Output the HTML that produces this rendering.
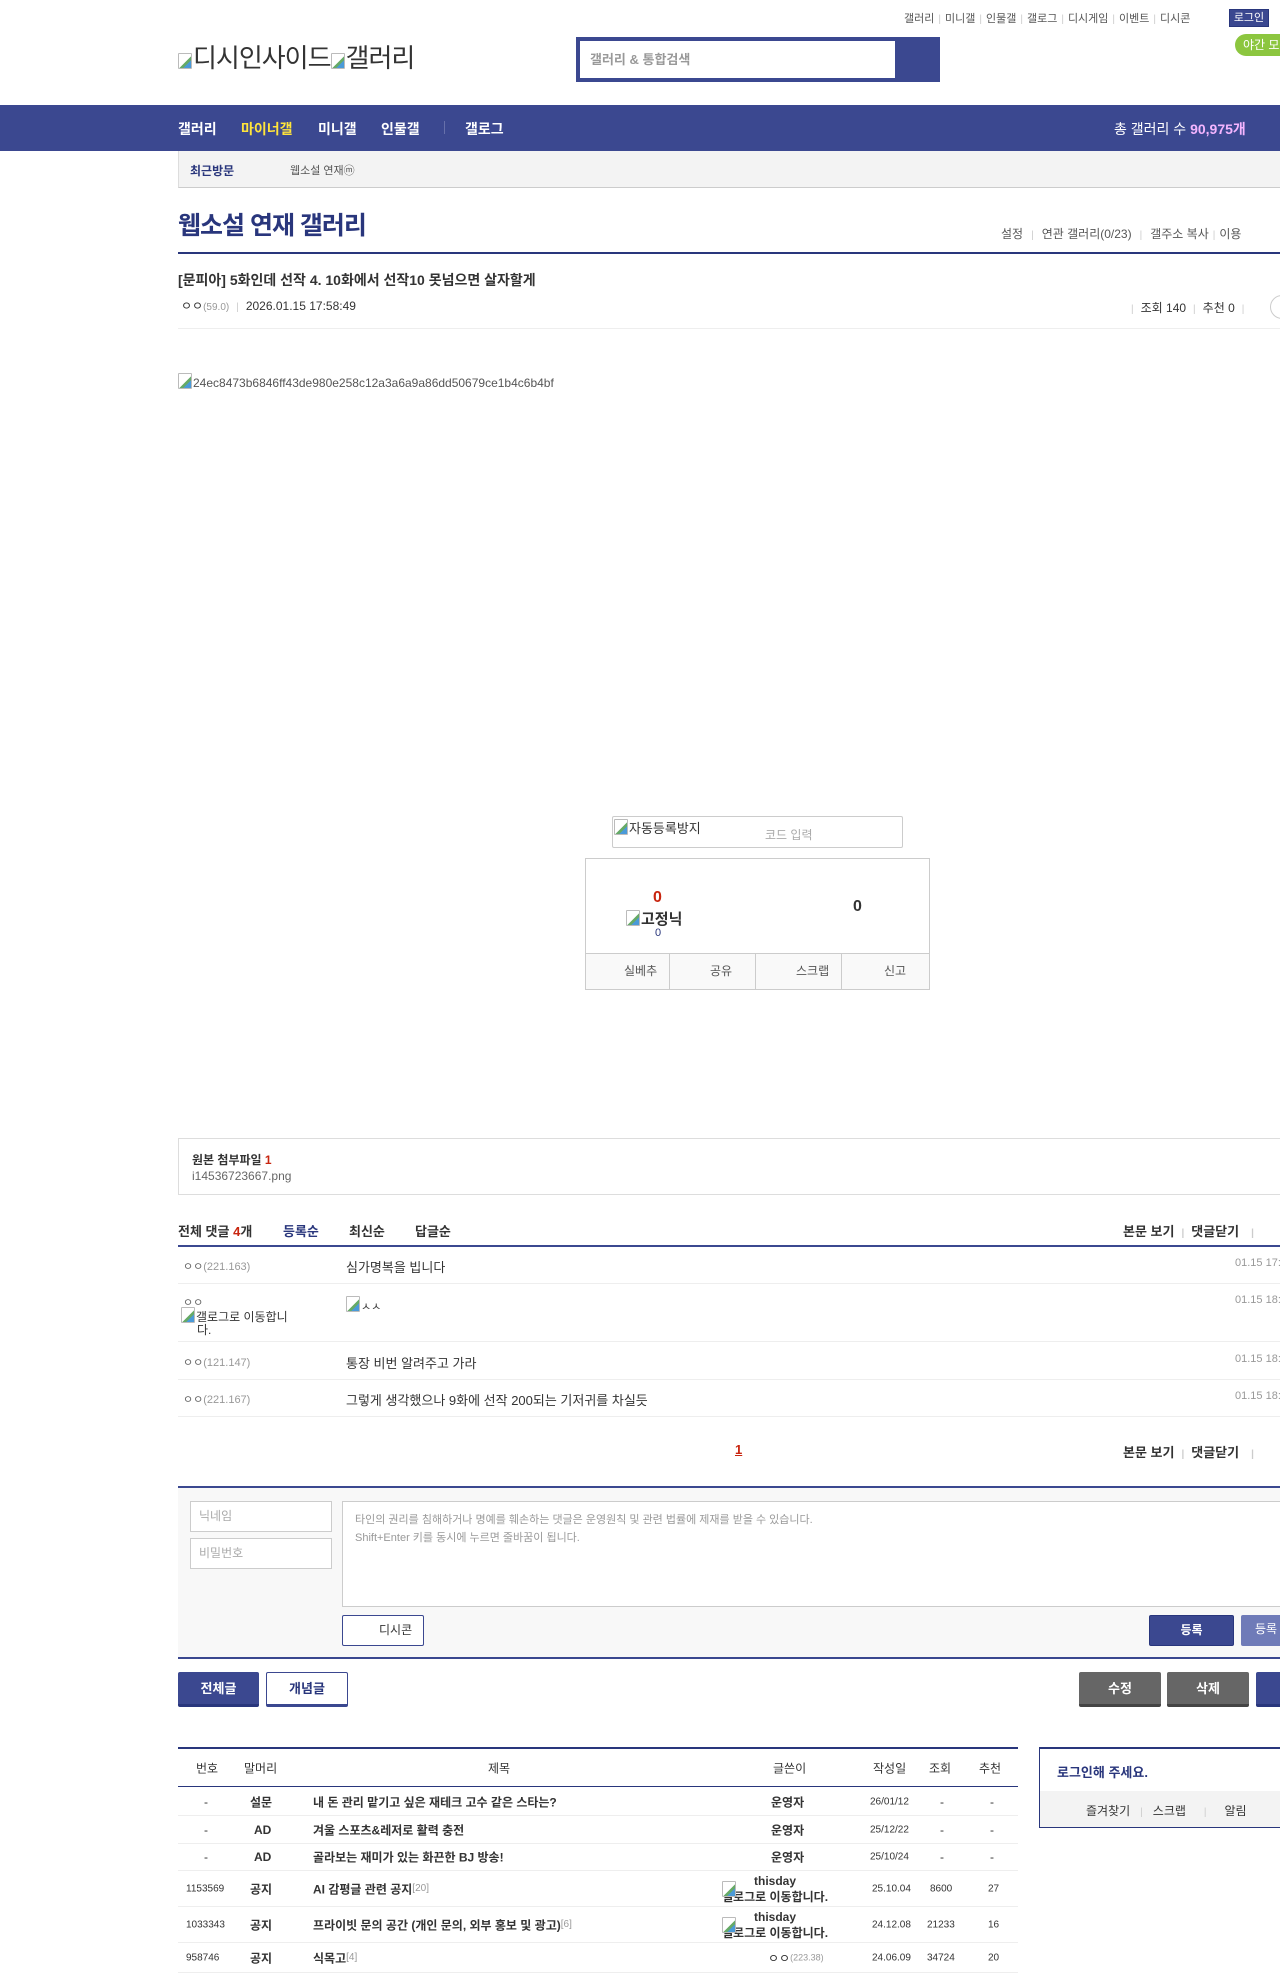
<!DOCTYPE html>
<html><head><meta charset="utf-8">
<style>
*{margin:0;padding:0;box-sizing:border-box}
body{width:1280px;height:1957px;overflow:hidden;position:relative;background:#fff;font-family:"Liberation Sans","Noto Sans CJK KR",sans-serif;color:#333;font-size:12px}
.a{position:absolute;white-space:nowrap}
.bi{display:inline-block;width:14px;height:16px;vertical-align:-2px;border:1px solid #bbb;border-radius:1px;background:linear-gradient(135deg,#fff 0,#fff 55%,#6a6 56%,#6a6 70%,#4a9ad8 71%);margin-right:1px}
.sep{color:#ccc;margin:0 4px;font-size:10px}
.navy{color:#29367c}
.gray{color:#888}
.row{position:absolute;left:178px;width:1112px;border-bottom:1px solid #eee}
.tr{position:absolute;left:178px;width:840px;border-bottom:1px solid #eee}
.tr span{position:absolute;top:50%;transform:translateY(-50%);white-space:nowrap}
.c{text-align:center}
</style></head><body>

<!-- top links -->
<div class="a" style="left:904px;top:10px;font-size:11px;color:#555">갤러리<span class="sep">|</span>미니갤<span class="sep">|</span>인물갤<span class="sep">|</span>갤로그<span class="sep">|</span>디시게임<span class="sep">|</span>이벤트<span class="sep">|</span>디시콘</div>
<div class="a" style="left:1229px;top:9px;width:40px;height:18px;background:#3b4890;border:1px solid #29367c;color:#fff;font-size:11px;text-align:center;line-height:16px">로그인</div>
<div class="a" style="left:1235px;top:34px;width:70px;height:22px;background:#8cc63f;border-radius:11px;color:#fff;font-size:12px;line-height:22px;padding-left:8px">야간 모드</div>

<!-- logo -->
<div class="a" style="left:178px;top:38px;font-size:26px;color:#333;letter-spacing:-1px"><span class="bi"></span>디시인사이드<span class="bi"></span>갤러리</div>

<!-- search -->
<div class="a" style="left:576px;top:37px;width:364px;height:45px;background:#3b4890"></div>
<div class="a" style="left:580px;top:41px;width:315px;height:37px;background:#fff;color:#999;font-size:13px;font-weight:bold;line-height:37px;padding-left:10px">갤러리 &amp; 통합검색</div>

<!-- nav -->
<div class="a" style="left:0;top:105px;width:1280px;height:46px;background:#3b4890"></div>
<div class="a" style="left:178px;top:119px;font-size:14px;font-weight:bold;color:#fff">갤러리</div>
<div class="a" style="left:241px;top:119px;font-size:14px;font-weight:bold;color:#ffe43b">마이너갤</div>
<div class="a" style="left:318px;top:119px;font-size:14px;font-weight:bold;color:#fff">미니갤</div>
<div class="a" style="left:381px;top:119px;font-size:14px;font-weight:bold;color:#fff">인물갤</div>
<div class="a" style="left:444px;top:121px;width:1px;height:13px;background:#6670aa"></div>
<div class="a" style="left:465px;top:119px;font-size:14px;font-weight:bold;color:#fff">갤로그</div>
<div class="a" style="left:1114px;top:119px;font-size:14px;color:#fff">총 갤러리 수 <b style="color:#f4b5ff">90,975개</b></div>

<!-- sub bar -->
<div class="a" style="left:178px;top:151px;width:1110px;height:37px;background:#f3f3f3;border-left:1px solid #ddd;border-bottom:1px solid #ccc"></div>
<div class="a" style="left:190px;top:162px;font-size:12px;font-weight:bold;color:#29367c">최근방문</div>
<div class="a" style="left:290px;top:162px;font-size:11px;color:#555">웹소설 연재ⓜ</div>

<!-- title -->
<div class="a" style="left:178px;top:206px;font-size:25px;font-weight:bold;color:#29367c;letter-spacing:-1px">웹소설 연재 갤러리</div>
<div class="a" style="left:1001px;top:225px;font-size:12px;color:#555">설정<span class="sep" style="margin:0 8px">|</span>연관 갤러리(0/23)<span class="sep" style="margin:0 8px">|</span>갤주소 복사<span class="sep">|</span>이용</div>
<div class="a" style="left:178px;top:252px;width:1110px;height:2px;background:#29367c"></div>

<!-- post head -->
<div class="a" style="left:178px;top:270px;font-size:14px;font-weight:bold;color:#333">[문피아] 5화인데 선작 4. 10화에서 선작10 못넘으면 살자할게</div>
<div class="a" style="left:181px;top:297px;font-size:12px;color:#333">ㅇㅇ<span style="font-size:10px;color:#999">(59.0)</span><span class="sep" style="margin:0 7px">|</span>2026.01.15 17:58:49</div>
<div class="a" style="left:1124px;top:299px;font-size:12px;color:#333"><span class="sep" style="margin:0 7px">|</span>조회 140<span class="sep" style="margin:0 7px">|</span>추천 0<span class="sep" style="margin:0 7px">|</span></div>
<div class="a" style="left:1270px;top:295px;width:24px;height:24px;border:1px solid #ccc;border-radius:12px"></div>
<div class="a" style="left:178px;top:328px;width:1110px;height:1px;background:#eee"></div>

<div class="a" style="left:178px;top:373px;font-size:12px;color:#555"><span class="bi"></span>24ec8473b6846ff43de980e258c12a3a6a9a86dd50679ce1b4c6b4bf</div>

<!-- captcha -->
<div class="a" style="left:612px;top:816px;width:291px;height:32px;border:1px solid #ccc;border-radius:2px"></div>
<div class="a" style="left:614px;top:818px;font-size:13px;color:#333"><span class="bi"></span>자동등록방지</div>
<div class="a" style="left:765px;top:826px;font-size:12px;color:#aaa">코드 입력</div>

<!-- recommend box -->
<div class="a" style="left:585px;top:858px;width:345px;height:132px;border:1px solid #ccc"></div>
<div class="a" style="left:653px;top:889px;font-size:16px;font-weight:bold;color:#c8250f">0</div>
<div class="a" style="left:626px;top:908px;font-size:15px;font-weight:bold;color:#333"><span class="bi"></span>고정닉</div>
<div class="a" style="left:655px;top:927px;font-size:11px;color:#29367c">0</div>
<div class="a" style="left:853px;top:898px;font-size:16px;font-weight:bold;color:#333">0</div>
<div class="a" style="left:586px;top:953px;width:343px;height:36px;background:#f9f9f9;border-top:1px solid #ccc;display:flex">
<div style="flex:1;border-right:1px solid #ccc;font-size:12px;color:#555;line-height:34px;padding-left:38px">실베추</div>
<div style="flex:1;border-right:1px solid #ccc;font-size:12px;color:#555;line-height:34px;padding-left:40px">공유</div>
<div style="flex:1;border-right:1px solid #ccc;font-size:12px;color:#555;line-height:34px;padding-left:40px">스크랩</div>
<div style="flex:1;font-size:12px;color:#555;line-height:34px;padding-left:42px">신고</div>
</div>

<!-- attachment -->
<div class="a" style="left:178px;top:1138px;width:1112px;height:57px;border:1px solid #ddd"></div>
<div class="a" style="left:192px;top:1151px;font-size:12px;font-weight:bold;color:#333">원본 첨부파일 <span style="color:#c8250f">1</span></div>
<div class="a" style="left:192px;top:1169px;font-size:12px;color:#666">i14536723667.png</div>

<!-- comments header -->
<div class="a" style="left:178px;top:1221px;font-size:13px;font-weight:bold;color:#333">전체 댓글 <span style="color:#c8250f">4</span>개</div>
<div class="a" style="left:283px;top:1221px;font-size:13px;font-weight:bold;color:#29367c">등록순</div>
<div class="a" style="left:349px;top:1221px;font-size:13px;font-weight:bold;color:#333">최신순</div>
<div class="a" style="left:415px;top:1221px;font-size:13px;font-weight:bold;color:#333">답글순</div>
<div class="a" style="left:1123px;top:1221px;font-size:13px;font-weight:bold;color:#333">본문 보기<span class="sep" style="margin:0 7px">|</span>댓글닫기<span class="sep" style="margin:0 12px">|</span></div>
<div class="a" style="left:178px;top:1245px;width:1112px;height:2px;background:#3b4890"></div>

<div class="row" style="top:1247px;height:37px"></div>
<div class="a" style="left:183px;top:1258px;font-size:11px;color:#666">ㅇㅇ<span style="color:#999">(221.163)</span></div>
<div class="a" style="left:346px;top:1257px;font-size:13px;color:#333">심가명복을 빕니다</div>
<div class="a" style="left:1235px;top:1257px;font-size:11px;color:#999">01.15 17:00:00</div>

<div class="row" style="top:1284px;height:58px"></div>
<div class="a" style="left:183px;top:1294px;font-size:11px;color:#666">ㅇㅇ</div>
<div class="a" style="left:181px;top:1307px;font-size:12px;color:#333;line-height:13px;white-space:normal;width:130px"><span class="bi"></span>갤로그로 이동합니<br><span style="padding-left:16px">다.</span></div>
<div class="a" style="left:346px;top:1296px;font-size:11px;color:#333"><span class="bi"></span>ㅅㅅ</div>
<div class="a" style="left:1235px;top:1294px;font-size:11px;color:#999">01.15 18:00:00</div>

<div class="row" style="top:1342px;height:38px"></div>
<div class="a" style="left:183px;top:1354px;font-size:11px;color:#666">ㅇㅇ<span style="color:#999">(121.147)</span></div>
<div class="a" style="left:346px;top:1353px;font-size:13px;color:#333">통장 비번 알려주고 가라</div>
<div class="a" style="left:1235px;top:1353px;font-size:11px;color:#999">01.15 18:00:00</div>

<div class="row" style="top:1380px;height:37px"></div>
<div class="a" style="left:183px;top:1391px;font-size:11px;color:#666">ㅇㅇ<span style="color:#999">(221.167)</span></div>
<div class="a" style="left:346px;top:1390px;font-size:13px;color:#333">그렇게 생각했으나 9화에 선작 200되는 기저귀를 차실듯</div>
<div class="a" style="left:1235px;top:1390px;font-size:11px;color:#999">01.15 18:00:00</div>

<div class="a" style="left:735px;top:1442px;font-size:13px;font-weight:bold;color:#c8250f;text-decoration:underline">1</div>
<div class="a" style="left:1123px;top:1442px;font-size:13px;font-weight:bold;color:#333">본문 보기<span class="sep" style="margin:0 7px">|</span>댓글닫기<span class="sep" style="margin:0 12px">|</span></div>

<!-- comment form -->
<div class="a" style="left:178px;top:1486px;width:1112px;height:173px;background:#f8f8f8;border-top:2px solid #3b4890;border-bottom:2px solid #3b4890"></div>
<div class="a" style="left:190px;top:1501px;width:142px;height:31px;background:#fff;border:1px solid #ccc;font-size:12px;color:#aaa;line-height:29px;padding-left:8px">닉네임</div>
<div class="a" style="left:190px;top:1538px;width:142px;height:31px;background:#fff;border:1px solid #ccc;font-size:12px;color:#aaa;line-height:29px;padding-left:8px">비밀번호</div>
<div class="a" style="left:342px;top:1501px;width:948px;height:106px;background:#fff;border:1px solid #ccc;font-size:11px;color:#999;line-height:18px;padding:9px 12px;white-space:normal">타인의 권리를 침해하거나 명예를 훼손하는 댓글은 운영원칙 및 관련 법률에 제재를 받을 수 있습니다.<br>Shift+Enter 키를 동시에 누르면 줄바꿈이 됩니다.</div>
<div class="a" style="left:342px;top:1615px;width:82px;height:31px;background:#fff;border:1px solid #3b4890;border-radius:2px;font-size:12px;color:#333;line-height:29px;padding-left:36px">디시콘</div>
<div class="a" style="left:1149px;top:1615px;width:85px;height:31px;background:#3b4890;border:1px solid #29367c;border-radius:2px;font-size:12px;font-weight:bold;color:#fff;line-height:29px;text-align:center">등록</div>
<div class="a" style="left:1241px;top:1615px;width:60px;height:31px;background:#6f7bb8;border-radius:2px;font-size:12px;color:#fff;line-height:29px;padding-left:14px">등록</div>

<!-- buttons -->
<div class="a" style="left:178px;top:1672px;width:81px;height:35px;background:#3b4890;border-bottom:3px solid #29367c;border-radius:2px;color:#fff;font-size:13px;font-weight:bold;text-align:center;line-height:33px">전체글</div>
<div class="a" style="left:266px;top:1672px;width:82px;height:35px;background:#fff;border:1px solid #3b4890;border-bottom:3px solid #3b4890;border-radius:2px;color:#29367c;font-size:13px;font-weight:bold;text-align:center;line-height:31px">개념글</div>
<div class="a" style="left:1079px;top:1672px;width:82px;height:35px;background:#666;border-bottom:3px solid #444;border-radius:2px;color:#fff;font-size:13px;font-weight:bold;text-align:center;line-height:33px">수정</div>
<div class="a" style="left:1167px;top:1672px;width:82px;height:35px;background:#666;border-bottom:3px solid #444;border-radius:2px;color:#fff;font-size:13px;font-weight:bold;text-align:center;line-height:33px">삭제</div>
<div class="a" style="left:1256px;top:1672px;width:60px;height:35px;background:#3b4890;border-bottom:3px solid #29367c;border-radius:2px"></div>

<!-- list table -->
<div class="a" style="left:178px;top:1747px;width:840px;height:2px;background:#29367c"></div>
<div class="tr" style="top:1749px;height:38px;border-bottom:1px solid #29367c;font-size:12px;color:#333">
<span style="left:18px">번호</span><span style="left:66px">말머리</span><span style="left:310px">제목</span><span style="left:595px">글쓴이</span><span style="left:695px">작성일</span><span style="left:751px">조회</span><span style="left:801px">추천</span></div>

<div class="tr" style="top:1788px;height:28px;font-size:12px"><span style="left:26px">-</span><span style="left:72px;font-weight:bold">설문</span><span style="left:135px;font-weight:bold">내 돈 관리 맡기고 싶은 재테크 고수 같은 스타는?</span><span style="left:593px;font-weight:bold">운영자</span><span style="left:692px;font-size:10px">26/01/12</span><span style="left:762px">-</span><span style="left:812px">-</span></div>
<div class="tr" style="top:1816px;height:28px;font-size:12px"><span style="left:26px">-</span><span style="left:76px;font-weight:bold">AD</span><span style="left:135px;font-weight:bold">겨울 스포츠&amp;레저로 활력 충전</span><span style="left:593px;font-weight:bold">운영자</span><span style="left:692px;font-size:10px">25/12/22</span><span style="left:762px">-</span><span style="left:812px">-</span></div>
<div class="tr" style="top:1844px;height:27px;font-size:12px"><span style="left:26px">-</span><span style="left:76px;font-weight:bold">AD</span><span style="left:135px;font-weight:bold">골라보는 재미가 있는 화끈한 BJ 방송!</span><span style="left:593px;font-weight:bold">운영자</span><span style="left:692px;font-size:10px">25/10/24</span><span style="left:762px">-</span><span style="left:812px">-</span></div>
<div class="tr" style="top:1871px;height:36px;font-size:12px"><span style="left:8px;font-size:10px">1153569</span><span style="left:72px;font-weight:bold">공지</span><span style="left:135px;font-weight:bold">AI 감평글 관련 공지 <span style="font-weight:normal;color:#999;font-size:10px;vertical-align:3px">[20]</span></span><span style="left:544px;font-weight:bold;text-align:center;line-height:16px">thisday<br><span class="bi"></span>갤로그로 이동합니다.</span><span style="left:694px;font-size:10px">25.10.04</span><span style="left:752px;font-size:10px">8600</span><span style="left:810px;font-size:10px">27</span></div>
<div class="tr" style="top:1907px;height:36px;font-size:12px"><span style="left:8px;font-size:10px">1033343</span><span style="left:72px;font-weight:bold">공지</span><span style="left:135px;font-weight:bold">프라이빗 문의 공간 (개인 문의, 외부 홍보 및 광고) <span style="font-weight:normal;color:#999;font-size:10px;vertical-align:3px">[6]</span></span><span style="left:544px;font-weight:bold;text-align:center;line-height:16px">thisday<br><span class="bi"></span>갤로그로 이동합니다.</span><span style="left:694px;font-size:10px">24.12.08</span><span style="left:749px;font-size:10px">21233</span><span style="left:810px;font-size:10px">16</span></div>
<div class="tr" style="top:1943px;height:30px;font-size:12px"><span style="left:8px;font-size:10px">958746</span><span style="left:72px;font-weight:bold">공지</span><span style="left:135px;font-weight:bold">식목고 <span style="font-weight:normal;color:#999;font-size:10px">[4]</span></span><span style="left:590px">ㅇㅇ<span style="font-size:9px;color:#999">(223.38)</span></span><span style="left:694px;font-size:10px">24.06.09</span><span style="left:749px;font-size:10px">34724</span><span style="left:810px;font-size:10px">20</span></div>

<!-- login box -->
<div class="a" style="left:1039px;top:1747px;width:260px;height:81px;border:1px solid #29367c;border-top-width:2px"></div>
<div class="a" style="left:1040px;top:1791px;width:258px;height:36px;background:#f3f3f3"></div>
<div class="a" style="left:1057px;top:1762px;font-size:13px;font-weight:bold;color:#29367c">로그인해 주세요.</div>
<div class="a" style="left:1086px;top:1802px;font-size:12px;color:#333">즐겨찾기<span class="sep" style="margin:0 10px">|</span>스크랩<span class="sep" style="margin:0 18px">|</span>알림</div>

</body></html>
